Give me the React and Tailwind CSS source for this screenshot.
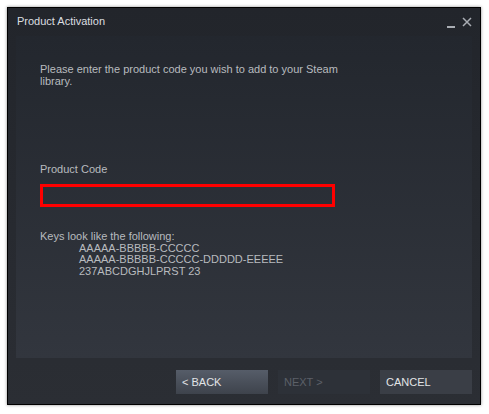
export default function App() {
  const font = { fontFamily: '"Liberation Sans", Arial, sans-serif' }

  return (
    <div className="w-[489px] h-[414px] bg-white pt-[7px] pl-[7px]" style={font}>
      <div className="w-[474px] h-[398px] flex flex-col border border-black bg-gradient-to-b from-[#22252b] to-[#2b2e34] shadow-[0_0_3px_rgba(0,0,0,0.45)]">
        <div className="h-[27px] flex items-center justify-between pl-[9px] pr-[8px]">
          <span className="text-[11px] text-[#dcdee0]">Product Activation</span>
          <div className="flex items-end gap-[7px]">
            <div className="w-[8px] h-[2px] bg-[#a9adb3] mt-[10px]" />
            <svg width="10" height="10" viewBox="0 0 10 10" className="mb-[1px]">
              <path d="M1 1 L9 9 M9 1 L1 9" stroke="#a9adb3" strokeWidth="1.5" />
            </svg>
          </div>
        </div>

        <div className="mx-[8px] mt-[1px] h-[322px] bg-gradient-to-b from-[#23272e] to-[#32363e] pl-[24px] pt-[27px] text-[11px] text-[#b8bbbf]">
          <p className="leading-[12px] w-[310px]">
            Please enter the product code you wish to add to your Steam library.
          </p>
          <p className="leading-[12px] mt-[76px]">Product Code</p>
          <div className="mt-[9px] w-[295px] h-[23px] border-[3px] border-[#ff0000]" />
          <div className="mt-[24px] leading-[11.7px]">
            <p>Keys look like the following:</p>
            <div className="pl-[39px]">
              <p>AAAAA-BBBBB-CCCCC</p>
              <p>AAAAA-BBBBB-CCCCC-DDDDD-EEEEE</p>
              <p>237ABCDGHJLPRST 23</p>
            </div>
          </div>
        </div>

        <div className="flex justify-end gap-[10px] mt-[12px] mr-[8px] text-[11px]">
          <button className="w-[92px] h-[24px] text-left pl-[6px] text-[#e2e4e7] bg-gradient-to-b from-[#565d69] to-[#3e434c]">
            &lt; BACK
          </button>
          <button className="w-[92px] h-[24px] text-left pl-[6px] text-[#5c6068] bg-[#2d3138]">
            NEXT &gt;
          </button>
          <button className="w-[92px] h-[24px] text-left pl-[6px] text-[#e2e4e7] bg-[#3a3e46]">
            CANCEL
          </button>
        </div>
      </div>
    </div>
  )
}
